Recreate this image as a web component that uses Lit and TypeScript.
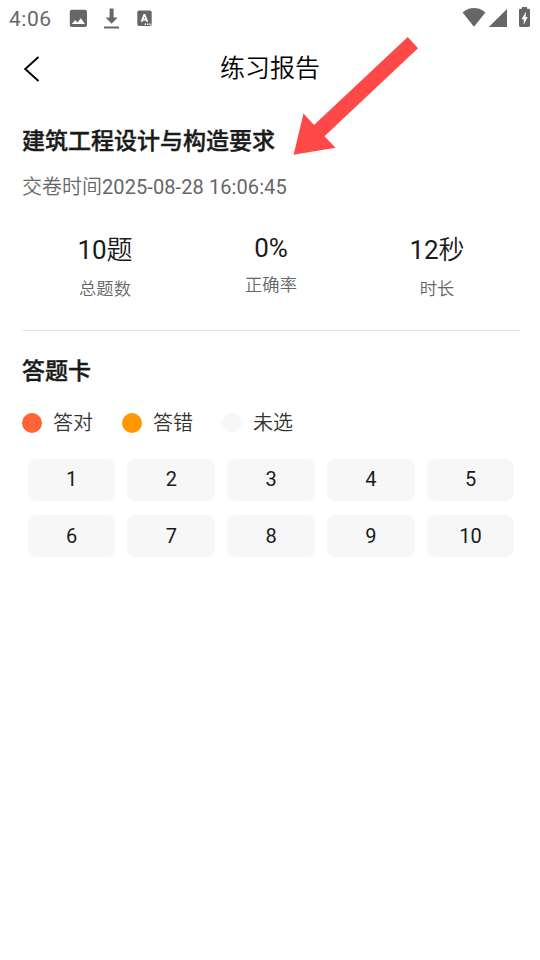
import { LitElement, html, css } from "lit";
import { customElement } from "lit/decorators.js";

@customElement("status-bar")
class StatusBar extends LitElement {
  static styles = css`
    :host { display: flex; height: 36px; align-items: center; color: #666; font-weight: 400; }
    .clock { width: 60px; padding-left: 9px; box-sizing: border-box; font-size: 21px; line-height: 36px; letter-spacing: 0.5px; padding-top: 2px; }
    svg { display: block; fill: #666; }
    .right { margin-left: auto; }
  `;
  render() {
    return html`
      <span class="clock">4:06</span>
      <svg width="100" height="36" viewBox="60 0 100 36">
        <path fill-rule="evenodd" d="M71.8 9.8H85a2 2 0 0 1 2 2V25a2 2 0 0 1-2 2H71.8a2 2 0 0 1-2-2V11.8a2 2 0 0 1 2-2ZM71.8 24H85l-4.2-5.7-3.4 4.1-2.3-2.5Z"/>
        <path d="M109.6 8.6h4v9h4l-6 6.1-6-6.1h4ZM104 26.4h15v2h-15Z"/>
        <path d="M139 10.5h11a1.7 1.7 0 0 1 1.7 1.7V24.3a1.7 1.7 0 0 1-1.7 1.7H139a1.7 1.7 0 0 1-1.7-1.7V12.2a1.7 1.7 0 0 1 1.7-1.7Z"/>
        <path fill="none" stroke="#fff" stroke-width="1.8" stroke-linejoin="bevel" d="m141.5 21.8 2.9-7.6 2.9 7.6M142.2 19.6h4.4"/>
        <path fill="#fff" d="M144.7 23.6h1.4v1.4h-1.4Zm2.3 0h1.4v1.4H147Zm2.3 0h1.4v1.4h-1.4Z"/>
      </svg>
      <svg class="right" width="80" height="36" viewBox="460 0 80 36">
        <path d="M462.6 12.4C469.5 6.6 478.5 6.6 485.4 12.4L474 26.7Z"/>
        <path d="M507 9v18h-18.2Z"/>
        <path fill-rule="evenodd" d="M522 7h5v1.8h1.6a1.4 1.4 0 0 1 1.4 1.4V25.6a1.4 1.4 0 0 1-1.4 1.4h-8.2a1.4 1.4 0 0 1-1.4-1.4V10.2a1.4 1.4 0 0 1 1.4-1.4H522ZM526 11.6l-4.4 7.6h2.1v5.6l4-7.8h-2.2Z"/>
      </svg>
    `;
  }
}

@customElement("app-root")
class AppRoot extends LitElement {
  static styles = css`
    :host {
      display: block; position: relative; height: 960px; overflow: hidden; background: #fff; color: #1a1a1a;
      font-family: Roboto, "Noto Sans CJK SC", sans-serif; font-weight: 350;
    }
    .nav { display: grid; grid-template-columns: 60px 1fr 60px; height: 64px; align-items: center; }
    .back { display: block; fill: none; stroke: #000; stroke-width: 1.9; }
    .nav-title { padding-top: 2px; text-align: center; font-size: 25px; line-height: 62px; color: #000; }
    .content { padding: 23px 20px 0 22px; }
    h1, h2 { margin: 0; font-size: 23px; line-height: 38px; font-weight: 500; -webkit-text-stroke: 0.4px #1a1a1a; }
    .time { margin-top: 7px; height: 38px; font-size: 20px; line-height: 38px; color: #666; }
    .date { letter-spacing: 0.09px; }
    .date, .number, .answer { font-weight: 400; }
    .stats { display: grid; grid-template-columns: repeat(3, 1fr); height: 101px; padding-top: 23px; border-bottom: 1px solid #e5e5e5; text-align: center; }
    .value { height: 42px; font-size: 26px; line-height: 42px; }
    .label { font-size: 17.3px; line-height: 26px; padding-top: 5px; color: #666; }
    .latin .value { height: 38px; line-height: 38px; }
    .card-title { margin-top: 22px; }
    .legend { display: flex; margin-top: 17px; height: 30px; }
    .key { display: flex; align-items: center; width: 100px; font-size: 20px; line-height: 30px; color: #333; }
    .dot { width: 20px; height: 20px; margin-right: 11px; border-radius: 50%; }
    .right { background: #ff6434; }
    .wrong { background: #ff9800; }
    .empty { background: #f7f7f7; }
    .answers { display: grid; grid-template-columns: repeat(5, 1fr); row-gap: 14px; margin: 21px -0.4px 0 -0.3px; }
    .answer { height: 42px; margin: 0 6px; border-radius: 8px; background: #f7f7f7; font-size: 20px; line-height: 41px; text-align: center; }
    .answer:nth-child(n + 6) { line-height: 43px; }
    .pointer { position: absolute; left: 280px; top: 30px; fill: #ff4848; }
  `;

  private stats = [["10", "题", "总题数"], ["0%", "", "正确率"], ["12", "秒", "时长"]];
  private legend = [["right", "答对"], ["wrong", "答错"], ["empty", "未选"]];

  render() {
    return html`
      <status-bar></status-bar>
      <header class="nav">
        <svg class="back" width="60" height="64" viewBox="0 36 60 64"><path d="M38.5 57 25.2 69 38.5 81"/></svg>
        <div class="nav-title">练习报告</div>
      </header>
      <main class="content">
        <h1>建筑工程设计与构造要求</h1>
        <div class="time">交卷时间<span class="date">2025-08-28 16:06:45</span></div>
        <section class="stats">
          ${this.stats.map(([value, unit, label]) => html`
            <div class=${unit ? "" : "latin"}>
              <div class="value"><span class="number">${value}</span>${unit}</div>
              <div class="label">${label}</div>
            </div>`)}
        </section>
        <h2 class="card-title">答题卡</h2>
        <div class="legend">
          ${this.legend.map(([kind, name]) => html`<div class="key"><i class="dot ${kind}"></i>${name}</div>`)}
        </div>
        <div class="answers">
          ${Array.from({ length: 10 }, (_, i) => html`<div class="answer">${i + 1}</div>`)}
        </div>
      </main>
      <svg class="pointer" width="150" height="135" viewBox="280 30 150 135">
        <path d="M407.7 37 418 48.3 324.5 136.3 335.5 147.7 293.6 154.8 303.5 113.6 314 125Z"/>
      </svg>
    `;
  }
}
